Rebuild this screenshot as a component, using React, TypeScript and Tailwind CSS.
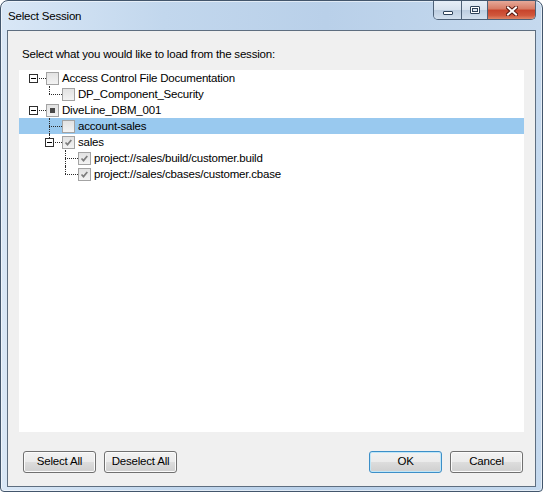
import type { ReactNode } from 'react';

type Check = 'none' | 'partial' | 'checked';
type Line = 'root' | 'tee' | 'elbow';

interface Row {
  level: 0 | 1 | 2;
  label: string;
  line: Line;
  check: Check;
  expand?: boolean;
  selected?: boolean;
}

const rows: Row[] = [
  { level: 0, label: 'Access Control File Documentation', line: 'root', check: 'none', expand: true },
  { level: 1, label: 'DP_Component_Security', line: 'elbow', check: 'none' },
  { level: 0, label: 'DiveLine_DBM_001', line: 'root', check: 'partial', expand: true },
  { level: 1, label: 'account-sales', line: 'tee', check: 'none', selected: true },
  { level: 1, label: 'sales', line: 'elbow', check: 'checked', expand: true },
  { level: 2, label: 'project://sales/build/customer.build', line: 'tee', check: 'checked' },
  { level: 2, label: 'project://sales/cbases/customer.cbase', line: 'elbow', check: 'checked' },
];

const indent = { 0: 'pl-0', 1: 'pl-4', 2: 'pl-8' } as const;

function CheckBox({ state }: { state: Check }) {
  return (
    <span className="flex h-[13px] w-[13px] shrink-0 items-center justify-center border border-[#a3a3a3] bg-[linear-gradient(to_bottom,#e2e2e2,#f3f3f3)]">
      {state === 'partial' && <span className="h-[5px] w-[5px] bg-[#474747]" />}
      {state === 'checked' && (
        <svg width="11" height="11" viewBox="0 0 11 11">
          <polyline points="2.5,5.5 4.5,7.6 8.3,3" fill="none" stroke="#7d7d7d" strokeWidth="1.7" />
        </svg>
      )}
    </span>
  );
}

function TreeRow({ row }: { row: Row }) {
  return (
    <div className={`flex h-4 items-center ${indent[row.level]} ${row.selected ? 'bg-[#99c9ef]' : ''}`}>
      <div className="relative h-4 w-[27px] shrink-0">
        <span className="absolute left-[14px] top-[8px] w-[13px] border-t border-dotted border-[#2a2a2a]" />
        {row.line === 'tee' && (
          <span className="absolute left-[14px] top-0 h-4 border-l border-dotted border-[#2a2a2a]" />
        )}
        {row.line === 'elbow' && (
          <span className="absolute left-[14px] top-0 h-[8px] border-l border-dotted border-[#2a2a2a]" />
        )}
        {row.expand && (
          <span className="absolute left-[10px] top-[4px] h-[9px] w-[9px] border border-[#2e2e2e] bg-white">
            <span className="absolute left-[1px] top-[3px] h-px w-[5px] bg-black" />
          </span>
        )}
      </div>
      <CheckBox state={row.check} />
      <span className="ml-[3px] whitespace-nowrap leading-4 text-black">{row.label}</span>
    </div>
  );
}

function WinButton({ children, primary }: { children: ReactNode; primary?: boolean }) {
  return (
    <button
      type="button"
      className={`flex h-[22px] w-[73px] items-center justify-center rounded-[3px] border bg-[linear-gradient(to_bottom,#f2f2f2_0%,#ebebeb_50%,#dddddd_50%,#cfcfcf_100%)] text-black ${
        primary
          ? 'border-[#3c8fc8] shadow-[inset_0_0_0_1px_#bfe6f8]'
          : 'border-[#707070] shadow-[inset_0_0_0_1px_#fbfbfb]'
      }`}
    >
      {children}
    </button>
  );
}

function CaptionButtons() {
  return (
    <div className="flex h-[19px] overflow-hidden rounded-b-[5px] border border-t-0 border-[#4e6177]">
      <div className="flex w-[28px] items-end justify-center border-r border-[#4e6177] bg-[linear-gradient(to_bottom,#e6eef7_0%,#d7e2ee_50%,#bccde0_50%,#d3e0ee_100%)] pb-[4px]">
        <span className="h-[4px] w-[10px] rounded-[1px] border border-[#2f435a] bg-white" />
      </div>
      <div className="flex w-[26px] items-start justify-center border-r border-[#4e6177] bg-[linear-gradient(to_bottom,#e6eef7_0%,#d7e2ee_50%,#bccde0_50%,#d3e0ee_100%)] pt-[5px]">
        <span className="flex h-[8px] w-[10px] items-center justify-center rounded-[1px] border border-[#2f435a] bg-white">
          <span className="h-[4px] w-[6px] border border-[#2f435a] bg-[#dfe8f2]" />
        </span>
      </div>
      <div className="flex w-[47px] items-start justify-center bg-[linear-gradient(to_bottom,#e6a999_0%,#d77a63_45%,#c7432b_50%,#d0573c_80%,#e08667_100%)] pt-[5px]">
        <svg width="12" height="10" viewBox="0 0 12 10">
          <path d="M2 1.5 L10 8.5 M10 1.5 L2 8.5" stroke="#5a1b12" strokeWidth="4" strokeLinecap="square" />
          <path d="M2 1.5 L10 8.5 M10 1.5 L2 8.5" stroke="#ffffff" strokeWidth="2" strokeLinecap="square" />
        </svg>
      </div>
    </div>
  );
}

export default function App() {
  return (
    <div className="flex h-[492px] w-[543px] flex-col rounded-t-[8px] rounded-b-[4px] border border-[#43566c] bg-[linear-gradient(to_right,#d9e7f6_0%,#c2d7ed_30%,#b9d0e9_60%,#c5d9ee_100%)] font-['Liberation_Sans',Arial,sans-serif] text-[11.5px] tracking-[-0.2px] shadow-[inset_0_0_0_1px_rgba(255,255,255,0.55)]">
      <div className="flex h-[29px] shrink-0 items-start">
        <span className="mt-[7px] pl-[7px] leading-4 text-black">Select Session</span>
        <div className="ml-auto mr-[6px]">
          <CaptionButtons />
        </div>
      </div>
      <div className="mx-[6px] mb-[4px] flex flex-1 flex-col border border-[#5e6e80] bg-[#f0f0f0]">
        <p className="pl-[14px] pt-[15px] leading-4 text-black">
          Select what you would like to load from the session:
        </p>
        <div className="mx-[11px] mt-2 h-[362px] bg-white">
          {rows.map((row) => (
            <TreeRow key={row.label} row={row} />
          ))}
        </div>
        <div className="mt-[19px] flex gap-[8px] pl-[15px] pr-[12px]">
          <WinButton>Select All</WinButton>
          <WinButton>Deselect All</WinButton>
          <div className="ml-auto flex gap-[8px]">
            <WinButton primary>OK</WinButton>
            <WinButton>Cancel</WinButton>
          </div>
        </div>
      </div>
    </div>
  );
}
